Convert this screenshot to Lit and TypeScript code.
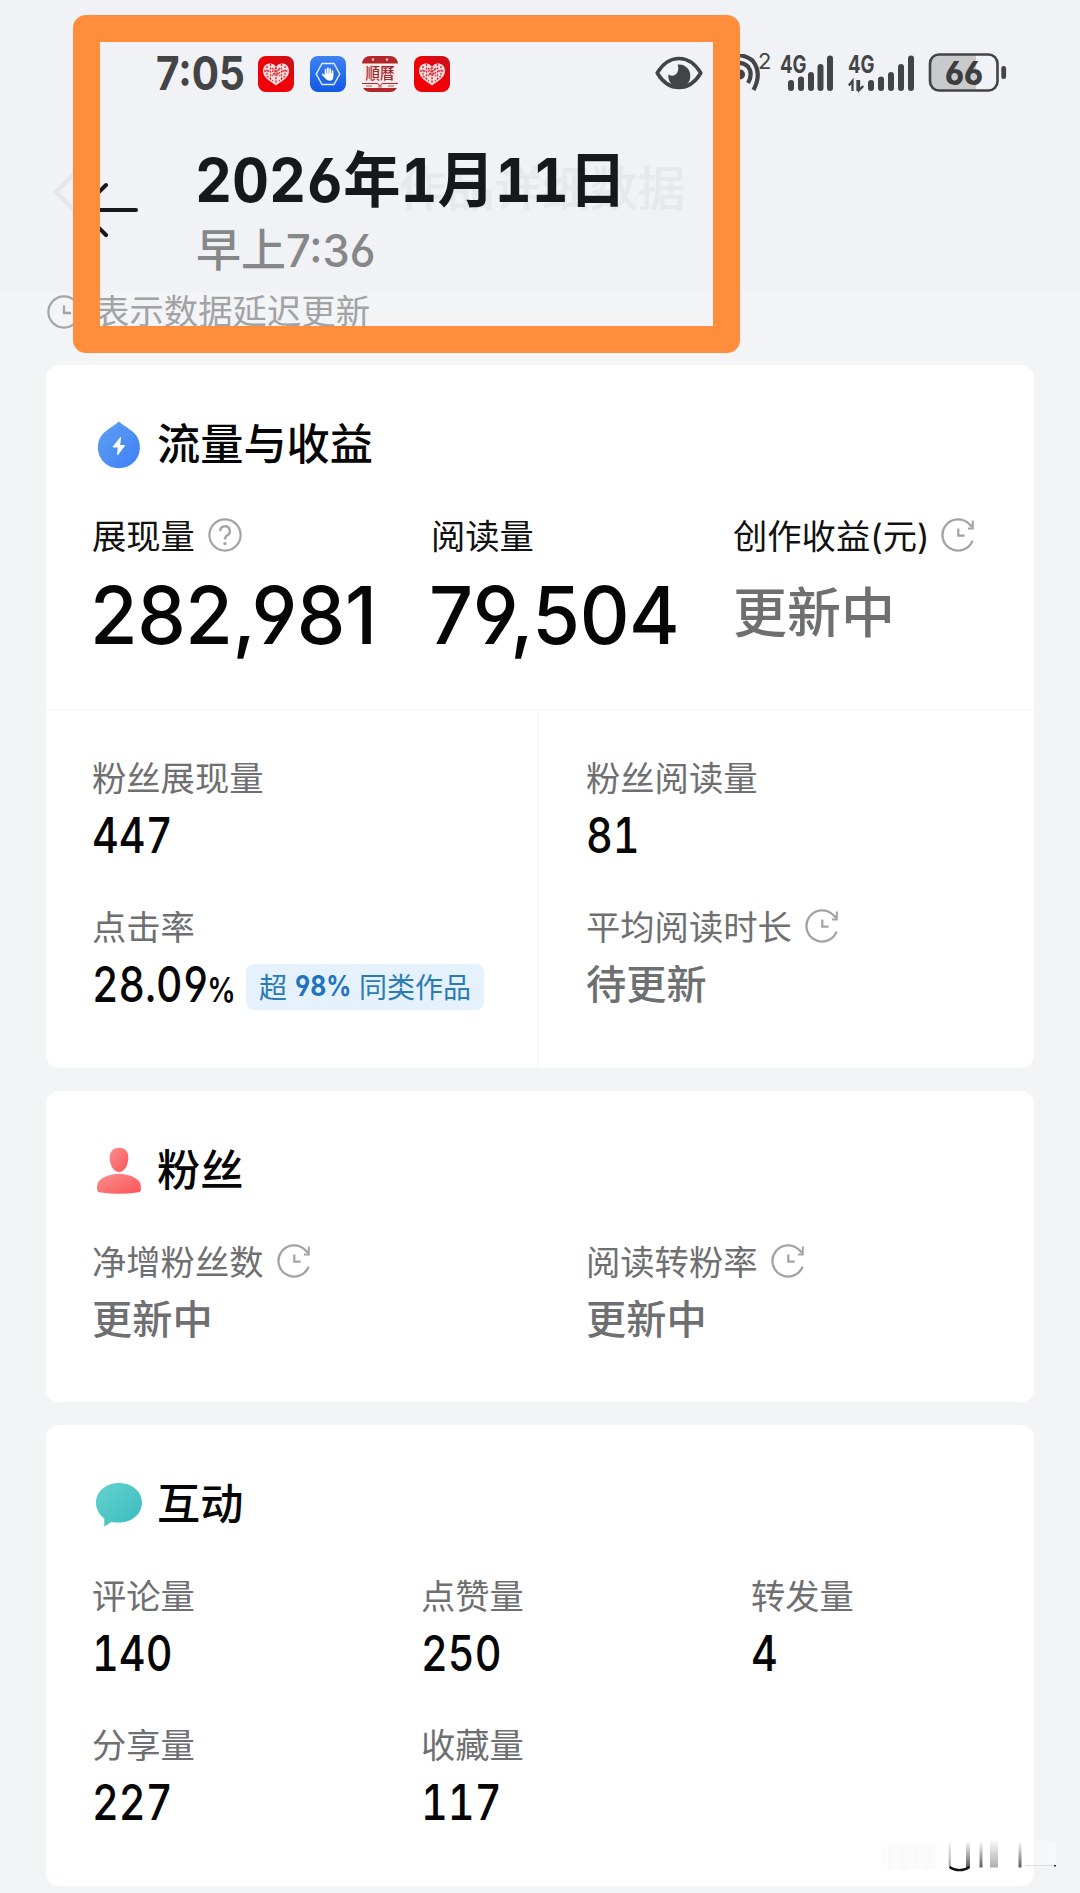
import { LitElement, html, css, svg, nothing } from "lit";
import { customElement, property } from "lit/decorators.js";

const clockIcon = html`<svg class="ico" width="34" height="34" viewBox="0 0 34 34" fill="none" stroke="#a3a3a3" stroke-width="2.3">
  <path d="M31.6 22.6A15.6 15.6 0 1 1 28 5.8L31 8.6" />
  <path d="M31.8 2.6V10.4H27" stroke-width="2" />
  <path d="M17.3 10.5V17.6H23.6" stroke-width="2.2" />
</svg>`;

const helpIcon = html`<svg class="ico" width="34" height="34" viewBox="0 0 34 34" fill="none" stroke="#a3a3a3" stroke-width="2.2">
  <circle cx="17" cy="17" r="15.6" />
  <path d="M12.2 13.2A4.8 4.8 0 1 1 19.4 17.2Q17 18.6 17 21.4" stroke-width="2.4" />
  <circle cx="17" cy="25.6" r="1.7" fill="#a3a3a3" stroke="none" />
</svg>`;

const heartApp = html`<svg width="36" height="36" viewBox="0 0 36 36">
  <defs><linearGradient id="hr" x1="0" y1="1" x2="1" y2="0"><stop offset=".5" stop-color="#f00008" /><stop offset="1" stop-color="#c4141c" /></linearGradient></defs>
  <rect width="36" height="36" rx="8" fill="url(#hr)" />
  <path d="M18 11C15 5.500 5 6.500 5 15C5 22 13 25.500 18 29.500C23 25.500 31 22 31 15C31 6.500 21 5.500 18 11Z" fill="#fbdcdc" />
  <g stroke="#d2323a" stroke-width="1.300" fill="none" stroke-dasharray="2 1.400">
    <path d="M9 10V20M12.500 8V24M23.500 8V24M27 10V20M6 15H12M24 15H30M9 20L15 25M27 20L21 25" />
    <path d="M14 12L22 20M22 12L14 20M18 11V27" stroke-width="1.500" />
    <circle cx="18" cy="16" r="3.300" />
  </g>
</svg>`;

const handApp = html`<svg width="36" height="36" viewBox="0 0 36 36">
  <defs><linearGradient id="bl" x1="0" y1="0" x2="0" y2="1"><stop offset="0" stop-color="#3d83f2" /><stop offset="1" stop-color="#1259e4" /></linearGradient></defs>
  <rect width="36" height="36" rx="8" fill="url(#bl)" />
  <path d="M12 7.500H24L29.800 18L24 28.500H12L6.200 18Z" fill="none" stroke="#e6f2ff" stroke-width="1.400" stroke-linejoin="round" />
  <g stroke="#fff" stroke-width="1.700" stroke-linecap="round" fill="none">
    <path d="M15.600 19V13.600M17.900 18V12.200M20.200 18V13M22.500 19V15M12.800 18.400L15.600 21.500" />
  </g>
  <path d="M14.800 17.500H23.300V20.500Q23.300 24.800 19.600 24.800Q16.800 24.800 14.800 21.500Z" fill="#fff" />
</svg>`;

const calendarApp = html`<svg width="36" height="36" viewBox="0 0 36 36">
  <defs><clipPath id="cc"><rect width="36" height="36" rx="8" /></clipPath></defs>
  <g clip-path="url(#cc)">
    <rect width="36" height="36" fill="#f9eceb" />
    <rect width="36" height="7.500" fill="#b3272b" />
    <rect y="32" width="36" height="4" fill="#b3272b" />
    <path d="M0 27.500H15M21 27.500H36" stroke="#b3272b" stroke-width="1" />
    <path d="M4 30H10M26 30H32M15 27L18 30L21 27M16 31H20" stroke="#c65a5a" stroke-width="1.200" fill="none" />
    <circle cx="11" cy="3.500" r="1.200" fill="#f2c9c4" /><circle cx="25" cy="3.500" r="1.200" fill="#f2c9c4" />
    <text x="3.500" y="23" textLength="29" lengthAdjust="spacingAndGlyphs" font-family="Noto Sans CJK TC, sans-serif" font-size="16" font-weight="500" fill="#a3282b">順曆</text>
  </g>
</svg>`;

const eyeIcon = html`<svg width="48" height="34" viewBox="0 0 48 34">
  <path d="M2.200 17Q11 2.500 24 2.500T45.800 17Q37 31.500 24 31.500T2.200 17Z" fill="none" stroke="#434445" stroke-width="3.600" stroke-linejoin="round" />
  <path d="M24 8.500A11 11.500 0 1 1 13.400 18.500Q19 21.500 22 17Q24.200 13 22.600 8.700Z" fill="#434445" />
</svg>`;

const wifiIcon = html`<svg width="46" height="38" viewBox="0 0 46 38" fill="none" stroke="#434445" stroke-width="4.200">
  <path d="M4 6Q22 -4 35.500 6.500Q45.500 19 36.500 36" />
  <path d="M12 13Q22 5 31 12.500Q36.500 20 31 29" />
  <circle cx="23" cy="20.500" r="5" fill="#434445" stroke="none" />
</svg>`;

const signalBars = (xs: number[], arrows: boolean) => html`<svg class="bars" width="68" height="38" viewBox="0 0 68 38">
  <text x="0" y="18.300" textLength="26.500" lengthAdjust="spacingAndGlyphs" font-family="Inter, sans-serif" font-weight="700" font-size="24" fill="#434445">4G</text>
  ${xs.map((x, i) => svg`<rect x=${x} y=${[25, 21.5, 17, 9, 0.5][i]} width="6" height=${[11, 14.5, 19, 27, 35.5][i]} rx="3" fill="#434445" />`)}
  ${arrows ? svg`<path d="M4.500 36V26L0.800 30.500M9.500 36V25M11 25V35.300L15.300 31" fill="none" stroke="#434445" stroke-width="2.300" />` : nothing}
</svg>`;

const batteryIcon = html`<svg width="80" height="40" viewBox="0 0 80 40">
  <defs><clipPath id="bt"><rect x="1" y="2" width="69" height="37" rx="9" /></clipPath></defs>
  <rect x="1" y="2" width="47" height="37" fill="#c9cacc" clip-path="url(#bt)" />
  <rect x="2" y="2.500" width="67.500" height="36" rx="9" fill="none" stroke="#434445" stroke-width="2.600" />
  <rect x="73.300" y="14" width="4.800" height="13" rx="2.200" fill="#434445" />
  <text class="level" x="17" y="32.600" textLength="38" lengthAdjust="spacingAndGlyphs" font-family="Inter, sans-serif" font-weight="800" font-size="33" fill="#3c3d3e">66</text>
</svg>`;

const dropIcon = html`<svg width="48" height="50" viewBox="0 0 48 50">
  <defs><linearGradient id="dg" x1="0" y1="0" x2="1" y2="1"><stop offset="0" stop-color="#60a0f2" /><stop offset="1" stop-color="#3d80f6" /></linearGradient></defs>
  <path d="M24.900 1.600C28 4.800 33 7.300 38.500 11.500C43 15 45.900 20.500 45.900 27.500C45.900 39.500 36.500 48.200 24.900 48.200S3.900 39.500 3.900 27.500C3.900 20.500 6.800 15 11.300 11.500C16.800 7.300 21.800 4.800 24.900 1.600Z" fill="url(#dg)" />
  <path d="M26.500 17.500L19 27H24.300L23.500 35L30.700 25.500H25.600Z" fill="#fff" stroke="#fff" stroke-width="1" stroke-linejoin="round" />
</svg>`;

const personIcon = html`<svg width="48" height="50" viewBox="0 0 48 50">
  <defs><linearGradient id="pg" x1="0" y1="0" x2="1" y2="1"><stop offset="0" stop-color="#fb8f90" /><stop offset="1" stop-color="#fb5456" /></linearGradient></defs>
  <path d="M25 1.800C31.500 1.800 35 6.500 34.300 13C33.600 20.500 30 26 25 26S16.400 20.500 15.700 13C15 6.500 18.500 1.800 25 1.800Z" fill="url(#pg)" />
  <path d="M25 27.800C34 27.800 42 31.500 45.300 35.500C47 38 47.200 41 46.700 44.500Q46.300 46 44.500 46.200Q25 49.200 5.500 46.200Q3.700 46 3.300 44.500C2.800 41 3 38 4.700 35.500C8 31.500 16 27.800 25 27.800Z" fill="url(#pg)" />
</svg>`;

const bubbleIcon = html`<svg width="48" height="50" viewBox="0 0 48 50">
  <defs><linearGradient id="cg" x1="0" y1="0" x2="1" y2="1"><stop offset="0" stop-color="#62d3cf" /><stop offset="1" stop-color="#3bbabd" /></linearGradient></defs>
  <path d="M25 3C38 3 48 11.500 48 22.500C48 34 38 42.500 25 42.500Q21 42.500 17.500 42L10.300 46.500V38.500C5 34.500 2 29 2 22.500C2 11.500 12 3 25 3Z" fill="url(#cg)" />
</svg>`;

@customElement("metric-item")
export class MetricItem extends LitElement {
  static styles = css`
    :host { display: block; }
    .label {
      display: flex; align-items: center; gap: 13px; height: 48px;
      font-size: 34.3px; line-height: 48px; color: #6e6f71; white-space: nowrap;
    }
    .label.dark { color: #111; }
    .label.dark .tight { margin-left: -2px; }
    .value {
      display: flex; align-items: center; height: 60px; margin-top: 3px;
      font-weight: 500; white-space: nowrap;
    }
    .num {
      display: block; font-size: 49px; line-height: 60px; color: #060606; font-weight: 520;
      font-feature-settings: "tnum", "cv03", "cv04"; transform: scaleX(0.845); transform-origin: 0 50%;
    }
    .pending { font-size: 40.2px; line-height: 60px; color: #6e6f71; }
    .value.big { height: 90px; margin-top: 10px; }
    .big .num {
      font-size: 79.5px; line-height: 90px; font-weight: 530; letter-spacing: -0.5px; margin: -2px 0 0 -2px;
      font-feature-settings: "cv03", "cv04"; transform: scaleX(0.972);
    }
    .big .pending { font-size: 54px; line-height: 80px; padding-bottom: 4px; }
    .ico { display: block; flex: none; margin-bottom: 4px; }
  `;
  @property() label = "";
  @property() value = "";
  @property() icon = "";
  @property({ type: Boolean }) big = false;

  render() {
    const numeric = /^[\d,.]+$/.test(this.value);
    return html`
      <div class="label ${this.big ? "dark" : ""}">
        <span>${this.label}</span>
        ${this.icon === "clock" ? html`<span class="tight">${clockIcon}</span>` : this.icon === "help" ? helpIcon : nothing}
      </div>
      <div class="value ${this.big ? "big" : ""}">
        <slot><span class=${numeric ? "num" : "pending"}>${this.value}</span></slot>
      </div>`;
  }
}

@customElement("app-root")
export class AppRoot extends LitElement {
  static styles = css`
    :host {
      display: block; position: relative; width: 1080px; height: 1893px; overflow: hidden;
      background: #f3f4f6; font-family: Inter, "Noto Sans CJK SC", sans-serif;
      font-feature-settings: "cv03", "cv04";
    }
    svg { display: block; flex: none; }
    .bars { overflow: visible; }
    .level { font-feature-settings: "cv03"; }
    .top { height: 293px; background: #f0f2f6; }
    .status { display: flex; align-items: flex-start; height: 100px; padding: 0 0 0 156px; color: #434445; box-sizing: border-box; }
    .time { width: 102px; flex: none; padding-top: 48px; font-size: 46px; line-height: 50px; font-weight: 700; }
    .time span { display: block; transform: scaleX(0.88); transform-origin: 0 50%; white-space: nowrap; }
    .apps { display: flex; gap: 16px; padding-top: 56px; }
    .eye { margin-left: 205px; padding-top: 56px; }
    .wifi { margin-left: 14px; padding-top: 54px; }
    .two { width: 22px; margin-left: -5px; padding-top: 50px; font-size: 22px; line-height: 22px; }
    .sig { padding-top: 55px; width: 68px; flex: none; }
    .sig.b { width: 80px; }
    .battery { padding-top: 52px; }
    .nav { display: flex; align-items: center; height: 180px; padding-left: 52px; gap: 323px; box-sizing: border-box; }
    .nav svg { margin-top: 4px; }
    .ghost { font-size: 47.7px; line-height: 60px; color: #e6e8ea; font-weight: 500; white-space: nowrap; padding-bottom: 3px; }
    .note { display: flex; align-items: center; height: 72px; padding: 3px 47px 37px; box-sizing: border-box; gap: 14px; font-size: 34.4px; color: #a1a3a5; }
    .note .txt { line-height: 32px; white-space: nowrap; }
    .cards { display: flex; flex-direction: column; gap: 23px; padding: 0 46px; }
    .card { background: #fff; border-radius: 13px; box-sizing: border-box; overflow: hidden; }
    .pad { padding: 50px 46px 0; }
    .head { display: flex; align-items: center; height: 58px; margin-bottom: 40px; gap: 15px; font-size: 43.2px; font-weight: 500; color: #060606; line-height: 58px; padding-left: 2px; }
    .head svg { margin-top: 2px; }
    .first { height: 703px; }
    .upper { height: 346px; border-bottom: 2px solid #f8f8f9; box-sizing: border-box; }
    .three { display: grid; grid-template-columns: 339px 302px 1fr; }
    .halves { display: grid; grid-template-columns: 491px 1fr; height: 358px; }
    .half { display: flex; flex-direction: column; gap: 38px; padding: 44px 0 0 46px; }
    .half + .half { border-left: 2px solid #f8f8f9; padding-left: 47px; }
    .second { height: 311px; }
    .two-col { display: grid; grid-template-columns: 494px 1fr; }
    .third { height: 461px; }
    .grid { display: grid; grid-template-columns: 329px 330px 1fr; row-gap: 38px; }
    .rate { display: flex; align-items: baseline; width: 154px; margin-top: 4px; color: #060606; line-height: 60px; font-size: 49px; font-weight: 520; }
    .rate .in { display: block; transform: scaleX(0.835); transform-origin: 0 50%; white-space: nowrap; font-feature-settings: "tnum", "cv03", "cv04"; }
    .rate small { font-size: 34px; margin-left: -2px; font-weight: 600; }
    .badge { display: flex; align-items: center; justify-content: center; width: 238px; height: 46px; margin-top: 3px; padding-bottom: 2px; box-sizing: border-box; border-radius: 8px; background: #e5f2fc; color: #2b7cb5; font-size: 28px; font-weight: 400; white-space: nowrap; gap: 8px; }
    .badge b { font-weight: 700; width: 56px; color: #1f73c0; }
    .badge b span { display: block; transform: scaleX(0.88); transform-origin: 0 50%; }
    .frame { position: absolute; left: 73px; top: 15px; width: 667px; height: 338px; box-sizing: border-box; border: 27px solid #ff8e3c; border-radius: 13px; }
    .stamp { position: absolute; left: 99px; top: 138px; display: flex; align-items: flex-start; }
    .stamp .arrow { padding-top: 42px; width: 97px; }
    .date { font-size: 60px; line-height: 84px; font-weight: 700; color: #171819; white-space: nowrap; font-feature-settings: "tnum", "cv03", "cv04"; transform: scaleX(0.955); transform-origin: 0 50%; margin-left: -1px; }
    .when { font-size: 45px; line-height: 56px; font-weight: 500; color: #868789; white-space: nowrap; padding-top: 1px; }
    .when span { display: inline-block; transform: scaleX(0.965); transform-origin: 0 50%; }
    .smudge { position: absolute; left: 880px; top: 1839px; }
  `;

  render() {
    return html`
      <div class="top">
        <div class="status">
          <div class="time"><span>7:05</span></div>
          <div class="apps">${heartApp}${handApp}${calendarApp}${heartApp}</div>
          <div class="eye">${eyeIcon}</div>
          <div class="wifi">${wifiIcon}</div>
          <div class="two">2</div>
          <div class="sig">${signalBars([8, 18, 28, 37.5, 47], false)}</div>
          <div class="sig b">${signalBars([20, 30, 40, 50, 60], true)}</div>
          <div class="battery">${batteryIcon}</div>
        </div>
        <div class="nav">
          <svg width="24" height="42" viewBox="0 0 24 42" fill="none" stroke="#e4e6e9" stroke-width="4"><path d="M22 3L4 21L22 39" /></svg>
          <div class="ghost">作品详细数据</div>
        </div>
      </div>
      <div class="note">
        <svg width="34" height="34" viewBox="0 0 34 34" fill="none" stroke="#a3a5a7" stroke-width="2.3"><circle cx="17" cy="17" r="15.6" /><path d="M17 10.5V18H24" /></svg>
        <span class="txt">表示数据延迟更新</span>
      </div>
      <div class="cards">
        <section class="card first">
          <div class="pad upper">
            <div class="head">${dropIcon}<span>流量与收益</span></div>
            <div class="three">
              <metric-item big label="展现量" value="282,981" icon="help"></metric-item>
              <metric-item big label="阅读量" value="79,504"></metric-item>
              <metric-item big label="创作收益(元)" value="更新中" icon="clock"></metric-item>
            </div>
          </div>
          <div class="halves">
            <div class="half">
              <metric-item label="粉丝展现量" value="447"></metric-item>
              <metric-item label="点击率">
                <span class="rate"><span class="in">28.09<small>%</small></span></span>
                <span class="badge"><span>超</span><b><span>98%</span></b><span>同类作品</span></span>
              </metric-item>
            </div>
            <div class="half">
              <metric-item label="粉丝阅读量" value="81"></metric-item>
              <metric-item label="平均阅读时长" value="待更新" icon="clock"></metric-item>
            </div>
          </div>
        </section>
        <section class="card pad second">
          <div class="head">${personIcon}<span>粉丝</span></div>
          <div class="two-col">
            <metric-item label="净增粉丝数" value="更新中" icon="clock"></metric-item>
            <metric-item label="阅读转粉率" value="更新中" icon="clock"></metric-item>
          </div>
        </section>
        <section class="card pad third">
          <div class="head">${bubbleIcon}<span>互动</span></div>
          <div class="grid">
            <metric-item label="评论量" value="140"></metric-item>
            <metric-item label="点赞量" value="250"></metric-item>
            <metric-item label="转发量" value="4"></metric-item>
            <metric-item label="分享量" value="227"></metric-item>
            <metric-item label="收藏量" value="117"></metric-item>
          </div>
        </section>
      </div>
      <div class="stamp">
        <div class="arrow"><svg width="42" height="60" viewBox="0 0 42 60" fill="none" stroke="#171819" stroke-width="4" stroke-linecap="round"><path d="M-6 30H37M7 5L-18 30L7 55" /></svg></div>
        <div>
          <div class="date">2026年1月11日</div>
          <div class="when">早上<span>7:36</span></div>
        </div>
      </div>
      <div class="frame"></div>
      <svg class="smudge" width="176" height="36" viewBox="0 0 176 36">
        <defs>
          <linearGradient id="v" x1="0" y1="0" x2="0" y2="1"><stop offset="0" stop-color="#333" stop-opacity="0" /><stop offset="1" stop-color="#222" stop-opacity=".75" /></linearGradient>
          <linearGradient id="w" x1="0" y1="0" x2="0" y2="1"><stop offset="0" stop-color="#777" stop-opacity=".05" /><stop offset="1" stop-color="#777" stop-opacity=".6" /></linearGradient>
          <linearGradient id="s" x1="0" y1="0" x2="1" y2="0"><stop offset="0" stop-color="#fff" stop-opacity=".1" /><stop offset="1" stop-color="#fff" stop-opacity=".45" /></linearGradient>
        </defs>
        <g fill="#fafafa"><rect x="1" y="3" width="56" height="28" fill="#fcfcfc" /><rect x="8" y="7" width="5" height="24" /><rect x="19" y="7" width="9" height="24" /><rect x="33" y="7" width="5" height="24" /><rect x="44" y="7" width="10" height="24" /></g>
        <rect x="153" y="2" width="23" height="26" fill="url(#s)" />
        <rect x="68.500" y="2" width="2.500" height="26" fill="url(#w)" />
        <rect x="86" y="2" width="4" height="26" fill="url(#v)" />
        <path d="M69.500 28Q74 31.200 79.500 31.200T89.500 28" fill="none" stroke="#111" stroke-width="2.200" />
        <rect x="99.500" y="2" width="3" height="26.500" fill="url(#v)" />
        <rect x="110" y="2" width="8" height="26.500" fill="url(#w)" />
        <rect x="138.500" y="2" width="3" height="26.500" fill="url(#v)" />
        <path d="M145 26.500H176" stroke="#dcdddf" stroke-width="1" /><rect x="174" y="26" width="2" height="1.500" fill="#333" />
      </svg>`;
  }
}
